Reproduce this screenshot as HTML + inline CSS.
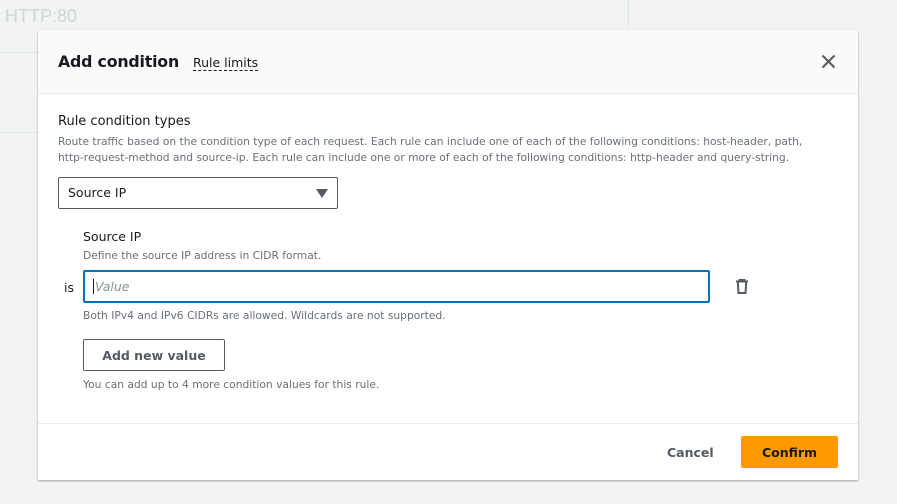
<!DOCTYPE html>
<html><head><style>
*{box-sizing:border-box;margin:0;padding:0}
body{width:897px;height:504px;background:#f2f3f3;font-family:"DejaVu Sans","Liberation Sans",sans-serif;position:relative;overflow:hidden;color:#16191f}
.bg{position:absolute;color:#d5dbdb}
.modal{position:absolute;left:38px;top:30px;width:820px;height:450px;background:#fff;box-shadow:0 1px 2px rgba(0,0,0,.35);}
.hdr{height:64px;background:#fafafa;border-bottom:1px solid #eaeded;position:relative}
.abs{position:absolute}
.desc{font-size:10.7px;color:#687078;line-height:16px}
</style></head><body>
<div class="bg" style="left:-6px;top:6px;font-size:18px;font-family:'Liberation Sans',sans-serif;color:#d0d5d5"><b style="color:#aab">:</b> HTTP:80</div>
<div class="abs" style="left:0;top:52px;width:38px;height:1px;background:#e3e6e6"></div>
<div class="abs" style="left:0;top:132px;width:38px;height:1px;background:#e3e6e6"></div>
<div class="abs" style="left:628px;top:0;width:1px;height:30px;background:#e3e6e6"></div>
<div class="modal">
 <div class="hdr">
  <div class="abs" style="left:20px;top:22px;font-size:15.8px;font-weight:bold;letter-spacing:-0.2px">Add condition</div>
  <div class="abs" style="left:155px;top:25px;font-size:12.5px;border-bottom:1px dashed #16191f;line-height:15px">Rule limits</div>
  <svg class="abs" style="left:783px;top:24px" width="15" height="15" viewBox="0 0 15 15"><path d="M1.5 1.5L13.5 13.5M13.5 1.5L1.5 13.5" stroke="#545b64" stroke-width="2"/></svg>
 </div>
 <div class="abs" style="left:20px;top:84px;font-size:13px">Rule condition types</div>
 <div class="abs desc" style="left:20px;top:104px;width:760px">Route traffic based on the condition type of each request. Each rule can include one of each of the following conditions: host-header, path, http-request-method and source-ip. Each rule can include one or more of each of the following conditions: http-header and query-string.</div>
 <div class="abs" style="left:20px;top:147px;width:280px;height:32px;border:1px solid #545b64;border-radius:2px;font-size:12.5px;padding:7px 0 0 9px">Source IP
  <svg class="abs" style="left:257px;top:11px" width="12" height="9"><path d="M0 0H12L6 9Z" fill="#545b64"/></svg></div>
 <div class="abs" style="left:45px;top:199px;font-size:12.5px">Source IP</div>
 <div class="abs desc" style="left:45px;top:218px">Define the source IP address in CIDR format.</div>
 <div class="abs" style="left:26px;top:250px;font-size:12.5px">is</div>
 <div class="abs" style="left:45px;top:240px;width:627px;height:33px;border:2px solid #0073bb;border-radius:2px;font-size:12.5px;font-style:italic;color:#879596;padding:7px 0 0 8px"><span style="border-left:1px solid #16191f;padding-left:1px">Value</span></div>
 <svg class="abs" style="left:697px;top:249px" width="14" height="15" viewBox="0 0 14 15"><path d="M1 2.5H13M4.5 2.5V1H9.5V2.5M2.8 2.5L3.5 14H10.5L11.2 2.5" stroke="#545b64" stroke-width="2" fill="none"/></svg>
 <div class="abs desc" style="left:45px;top:278px">Both IPv4 and IPv6 CIDRs are allowed. Wildcards are not supported.</div>
 <div class="abs" style="left:45px;top:309px;width:142px;height:32px;border:1px solid #545b64;border-radius:2px;font-size:12.5px;font-weight:bold;color:#545b64;text-align:center;line-height:31px">Add new value</div>
 <div class="abs desc" style="left:45px;top:347px">You can add up to 4 more condition values for this rule.</div>
 <div class="abs" style="left:0;top:393px;width:820px;height:1px;background:#eaeded"></div>
 <div class="abs" style="left:629px;top:415px;font-size:12.5px;font-weight:bold;color:#545b64">Cancel</div>
 <div class="abs" style="left:703px;top:406px;width:97px;height:32px;background:#ff9900;border-radius:2px;font-size:12.5px;font-weight:bold;text-align:center;line-height:33px">Confirm</div>
</div>
</body></html>
